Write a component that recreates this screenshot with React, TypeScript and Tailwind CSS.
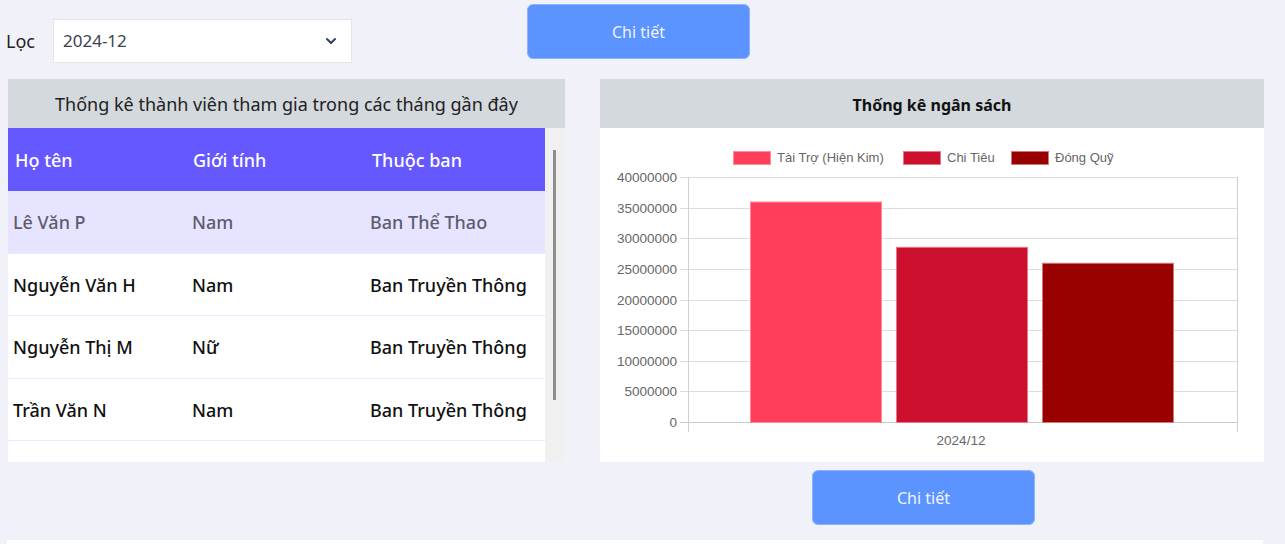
import { ChevronDown } from "lucide-react";

const members = [
  { name: "Lê Văn P", gender: "Nam", team: "Ban Thể Thao" },
  { name: "Nguyễn Văn H", gender: "Nam", team: "Ban Truyền Thông" },
  { name: "Nguyễn Thị M", gender: "Nữ", team: "Ban Truyền Thông" },
  { name: "Trần Văn N", gender: "Nam", team: "Ban Truyền Thông" },
];

const ticks = [40000000, 35000000, 30000000, 25000000, 20000000, 15000000, 10000000, 5000000, 0];

const bars = [
  { label: "Tài Trợ (Hiện Kim)", value: 36000000, color: "#ff3e5c", stroke: "#ff8a9c" },
  { label: "Chi Tiêu", value: 28600000, color: "#cc0f2c", stroke: "#e5788a" },
  { label: "Đóng Quỹ", value: 26000000, color: "#990000", stroke: "#d07a7a" },
];

function BudgetChart() {
  // plot area, in svg coords (panel body starts at x=600, y=128 on the page)
  const left = 88;
  const right = 637;
  const top = 49;
  const bottom = 294;
  const max = 40000000;
  const y = (v: number) => bottom - (v / max) * (bottom - top);
  const legendX = [133, 303, 411];

  return (
    <svg width="664" height="334" className="block" style={{ fontFamily: '"Liberation Sans", Arial, sans-serif' }}>
      {bars.map((b, i) => (
        <g key={b.label}>
          <rect x={legendX[i] + 0.5} y={23.5} width={37} height={13} fill={b.color} stroke={b.stroke} strokeWidth={1} />
          <text x={legendX[i] + 44} y={34} fontSize="13" fill="#666">
            {b.label}
          </text>
        </g>
      ))}

      {ticks.map((t) => (
        <g key={t}>
          <line x1={left - 8} x2={right} y1={Math.round(y(t)) + 0.5} y2={Math.round(y(t)) + 0.5} stroke={t === 0 ? "#c8c8c8" : "#dcdcdc"} strokeWidth={1} />
          <text x={left - 11} y={Math.round(y(t)) + 5} fontSize="13.5" fill="#666" textAnchor="end">
            {t}
          </text>
        </g>
      ))}
      <line x1={left + 0.5} x2={left + 0.5} y1={top} y2={bottom + 10} stroke="#d0d0d0" />
      <line x1={right + 0.5} x2={right + 0.5} y1={top} y2={bottom + 10} stroke="#d0d0d0" />

      {bars.map((b, i) => {
        const x = 150 + i * 146;
        const yy = y(b.value);
        return (
          <rect key={b.label} x={x + 0.5} y={yy + 0.5} width={131} height={bottom - yy} fill={b.color} stroke={b.stroke} strokeWidth={1} />
        );
      })}

      <text x={361} y={317} fontSize="13.5" fill="#666" textAnchor="middle">
        2024/12
      </text>
    </svg>
  );
}

function DetailButton({ className }: { className: string }) {
  return (
    <button
      className={`${className} w-[223px] rounded-md border border-[#8fb2ff] bg-[#5c94ff] text-[16px] text-[#eef3ff]`}
    >
      Chi tiết
    </button>
  );
}

export default function App() {
  return (
    <div className="h-[544px] overflow-hidden bg-[#f1f1fa] font-['Noto_Sans',sans-serif] text-[#1a1a1a]">
      {/* filter bar */}
      <div className="flex h-[79px] items-start pl-[6px]">
        <span className="mt-[28px] w-[47px] text-[18px] text-[#222]">Lọc</span>
        <div className="mt-[19px] flex h-[44px] w-[299px] items-center justify-between border border-[#e3e4ea] bg-white pl-[9px] pr-[12px]">
          <span className="text-[17px] text-[#3a4252]">2024-12</span>
          <ChevronDown className="h-[16px] w-[16px] text-[#34405a]" strokeWidth={3} />
        </div>
        <DetailButton className="ml-[175px] mt-[4px] h-[55px]" />
      </div>

      <div className="flex">
        {/* members */}
        <div className="ml-[8px] w-[557px]">
          <div className="flex h-[49px] items-center justify-center bg-[#d4d9dd] pt-[2px] text-[18px] text-[#222]">
            Thống kê thành viên tham gia trong các tháng gần đây
          </div>
          <div className="flex h-[334px]">
            <div className="w-[537px] overflow-hidden bg-white">
              <div className="grid h-[63px] grid-cols-[178px_178px_1fr] items-center bg-[#6658ff] pt-[2px] text-[18px] font-medium text-white">
                <div className="pl-[7px]">Họ tên</div>
                <div className="pl-[7px]">Giới tính</div>
                <div className="pl-[8px]">Thuộc ban</div>
              </div>
              {members.map((m, i) => (
                <div
                  key={m.name}
                  className={`grid h-[62.5px] grid-cols-[178px_178px_1fr] items-center border-b border-[#ebe9ff] pt-[2px] text-[18px] font-medium ${
                    i === 0 ? "bg-[#e6e4ff] text-[#5d5d6e]" : "bg-white text-[#111]"
                  }`}
                >
                  <div className="pl-[5px]">{m.name}</div>
                  <div className="pl-[6px]">{m.gender}</div>
                  <div className="pl-[6px]">{m.team}</div>
                </div>
              ))}
              {/* next row, scrolled out of view */}
              <div className="h-[62.5px] bg-white" />
            </div>
            {/* scrollbar */}
            <div className="w-[20px] bg-[#f0f0f0] pl-[8px] pt-[22px]">
              <div className="h-[250px] w-[3px] bg-[#8e8e8e]" />
            </div>
          </div>
        </div>

        {/* budget */}
        <div className="ml-[35px] w-[664px]">
          <div className="flex h-[49px] items-center justify-center bg-[#d4d9dd] pt-[2px] text-[16px] font-bold text-[#111]">
            Thống kê ngân sách
          </div>
          <div className="h-[334px] bg-white">
            <BudgetChart />
          </div>
        </div>
      </div>

      <DetailButton className="ml-[812px] mt-[8px] h-[55px]" />
      <div className="ml-[7px] mt-[15px] h-[10px] w-[1256px] bg-white" />
    </div>
  );
}
